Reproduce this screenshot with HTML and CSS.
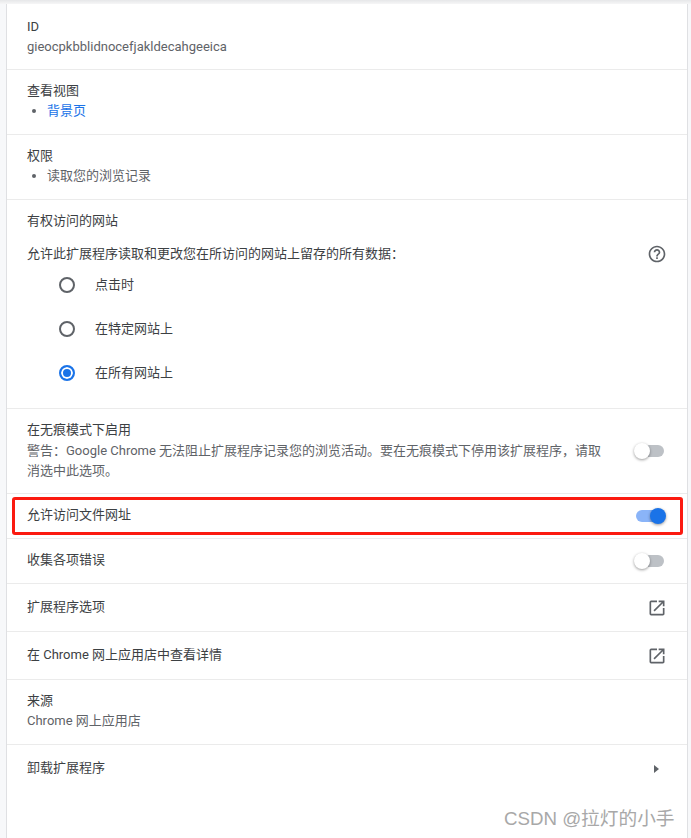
FILE: index.html
```html
<!DOCTYPE html>
<html lang="zh">
    <head>
        <meta charset="UTF-8">
        <meta name="viewport" content="width=device-width, initial-scale=1.0">
        <title>扩展程序详情</title>
        <link rel="stylesheet" href="styles.css">
    </head>
    <body>
        <div class="card">
            <div class="row stack first">
                <div class="label">ID</div>
                <div class="sub">gieocpkbblidnocefjakldecahgeeica</div>
            </div>

            <div class="row stack">
                <div class="label">查看视图</div>
                <ul class="list">
                    <li><a href="#">背景页</a></li>
                </ul>
            </div>

            <div class="row stack">
                <div class="label">权限</div>
                <ul class="list">
                    <li>读取您的浏览记录</li>
                </ul>
            </div>

            <!--Site access-->
            <div class="row sites">
                <div class="label">有权访问的网站</div>
                <div class="sites-head">
                    <span class="label">允许此扩展程序读取和更改您在所访问的网站上留存的所有数据：</span>
                    <svg class="help" viewBox="0 0 24 24" width="20" height="20">
                        <path d="M11 18h2v-2h-2v2zm1-16C6.48 2 2 6.48 2 12s4.48 10 10 10 10-4.48 10-10S17.52 2 12 2zm0 18c-4.41 0-8-3.59-8-8s3.59-8 8-8 8 3.59 8 8-3.59 8-8 8zm0-14c-2.21 0-4 1.79-4 4h2c0-1.1.9-2 2-2s2 .9 2 2c0 2-3 1.75-3 5h2c0-2.25 3-2.5 3-5 0-2.21-1.79-4-4-4z"/>
                    </svg>
                </div>
                <div class="radios">
                    <div class="radio-row"><span class="radio"></span>点击时</div>
                    <div class="radio-row"><span class="radio"></span>在特定网站上</div>
                    <div class="radio-row"><span class="radio checked"></span>在所有网站上</div>
                </div>
            </div>

            <div class="row incognito">
                <div class="incognito-text">
                    <div class="label">在无痕模式下启用</div>
                    <div class="sub warn">警告：Google Chrome 无法阻止扩展程序记录您的浏览活动。要在无痕模式下停用该扩展程序，请取消选中此选项。</div>
                </div>
                <span class="toggle"></span>
            </div>

            <div class="row line tall highlighted">
                <span class="label">允许访问文件网址</span>
                <span class="toggle on"></span>
            </div>

            <div class="row line tall">
                <span class="label">收集各项错误</span>
                <span class="toggle"></span>
            </div>

            <div class="row line">
                <span class="label">扩展程序选项</span>
                <svg class="open" viewBox="0 0 24 24" width="20" height="20">
                    <path d="M19 19H5V5h7V3H5a2 2 0 0 0-2 2v14a2 2 0 0 0 2 2h14c1.1 0 2-.9 2-2v-7h-2v7zM14 3v2h3.59l-9.83 9.83 1.41 1.41L19 6.41V10h2V3h-7z"/>
                </svg>
            </div>

            <div class="row line">
                <span class="label">在 Chrome 网上应用店中查看详情</span>
                <svg class="open" viewBox="0 0 24 24" width="20" height="20">
                    <path d="M19 19H5V5h7V3H5a2 2 0 0 0-2 2v14a2 2 0 0 0 2 2h14c1.1 0 2-.9 2-2v-7h-2v7zM14 3v2h3.59l-9.83 9.83 1.41 1.41L19 6.41V10h2V3h-7z"/>
                </svg>
            </div>

            <div class="row stack">
                <div class="label">来源</div>
                <div class="sub">Chrome 网上应用店</div>
            </div>

            <div class="row line">
                <span class="label">卸载扩展程序</span>
                <span class="arrow"></span>
            </div>
        </div>

        <div class="watermark">CSDN @拉灯的小手</div>
    </body>
</html>
```

FILE: styles.css
```css
html, body{
    margin: 0;
    height: 838px;
    overflow: hidden;
}
body{
    position: relative;
    background: #f7f8fa;
    font-family: Roboto, "Noto Sans CJK SC", sans-serif;
    font-size: 13px;
    line-height: 20px;
    color: #3c4043;
}
body::before{
    content: "";
    position: absolute;
    top: 0;
    left: 0;
    right: 0;
    height: 4px;
    background: linear-gradient(#e6e7e9, #f6f6f7);
}
.card{
    margin: 0 4px 0 7px;
    height: 838px;
    padding-top: 4px;
    box-sizing: border-box;
    background: #fff;
    box-shadow: -1px 0 0 #dfe0e3, 1px 0 0 #dfe0e3;
    border-top: 1px solid #ebebeb;
}
.row{
    padding: 0 20px;
    border-bottom: 1px solid #ebebeb;
    box-sizing: border-box;
}
.row:last-child{
    border-bottom: none;
}
.stack{
    height: 65px;
    padding-top: 11px;
}
.stack.first{
    padding-top: 12px;
}
.label{
    color: #3c4043;
}
.sub{
    color: #5f6368;
}
.list{
    margin: 0;
    padding-left: 20px;
    color: #5f6368;
}
.list a{
    color: #1a73e8;
    text-decoration: none;
}
.sites{
    height: 209px;
    padding-top: 11px;
}
.sites-head{
    display: flex;
    justify-content: space-between;
    align-items: center;
    margin-top: 13px;
    height: 20px;
}
.help, .open{
    fill: #5f6368;
}
.radios{
    margin-top: -1px;
}
.radio-row{
    display: flex;
    align-items: center;
    height: 44px;
    padding-left: 32px;
}
.radio{
    box-sizing: border-box;
    width: 16px;
    height: 16px;
    margin-right: 20px;
    border: 2px solid #5f6368;
    border-radius: 50%;
}
.radio.checked{
    border-color: #1a73e8;
    background: #1a73e8;
    box-shadow: inset 0 0 0 2px #fff;
}
.incognito{
    display: flex;
    justify-content: space-between;
    align-items: center;
    height: 85px;
}
.incognito-text{
    width: 580px;
    margin-top: -2px;
}
.warn{
    margin-top: 1px;
}
.toggle{
    position: relative;
    display: block;
    width: 28px;
    height: 12px;
    margin-right: 3px;
    border-radius: 6px;
    background: #bdc1c6;
}
.toggle::after{
    content: "";
    position: absolute;
    top: -2px;
    left: -2px;
    width: 16px;
    height: 16px;
    border-radius: 50%;
    background: #fff;
    box-shadow: 0 1px 3px rgba(0,0,0,0.4);
}
.toggle.on{
    background: #8ab4f8;
}
.toggle.on::after{
    left: 14px;
    background: #1a73e8;
}
.line{
    display: flex;
    justify-content: space-between;
    align-items: center;
    height: 48px;
}
.line.tall{
    height: 45px;
}
.line .label{
    margin-top: -2px;
}
.highlighted{
    position: relative;
}
.highlighted::before{
    content: "";
    position: absolute;
    top: 3px;
    left: 5px;
    right: 4px;
    bottom: 3px;
    border: 3px solid #fb1a10;
    border-radius: 3px;
}
.arrow{
    width: 0;
    height: 0;
    margin-right: 8px;
    border-left: 5px solid #5f6368;
    border-top: 4.5px solid transparent;
    border-bottom: 4.5px solid transparent;
}
.watermark{
    position: absolute;
    left: 504px;
    top: 807px;
    font-family: "Liberation Sans", "Noto Sans CJK SC", sans-serif;
    font-size: 18.7px;
    line-height: 24px;
    color: #a8a8a8;
}
```
